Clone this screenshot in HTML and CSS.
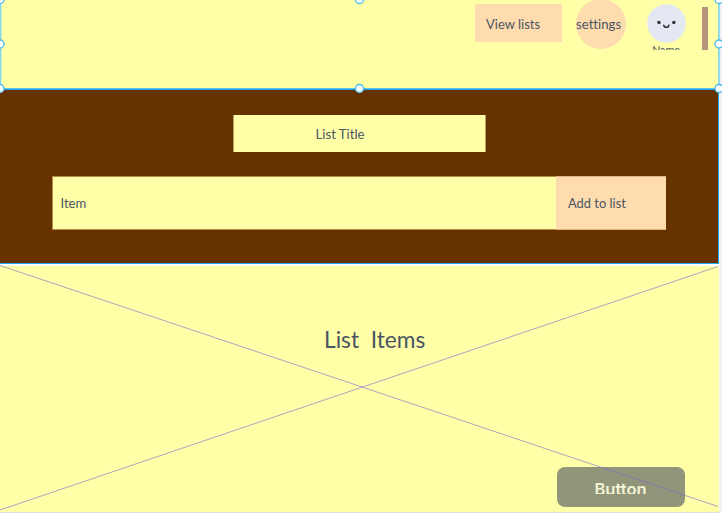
FILE: index.html
```html
<!DOCTYPE html>
<html lang="en">
<head>
<meta charset="utf-8">
<title>List maker</title>
<link rel="stylesheet" href="styles.css">
</head>
<body>
<main class="page">
  <header class="header">
    <button class="view-lists">View lists</button>
    <button class="settings">settings</button>
    <div class="profile">
      <svg class="avatar" viewBox="0 0 39 39"><circle cx="19.5" cy="19.5" r="19.3" fill="#e4e8f2"/><circle cx="12" cy="18.5" r="1.7" fill="#333"/><circle cx="26.8" cy="18.5" r="1.7" fill="#333"/><path d="M10 17.5l2 1M28.5 17.5l-1.5 1" stroke="#444" stroke-width=".8"/><path d="M16.6 20.6c.2 3.6 5.200 3.600 5.400 0" fill="none" stroke="#333" stroke-width="1.400"/></svg>
      <span class="name">Name</span>
    </div>
    <div class="scrollbar"></div>
  </header>
  <section class="editor">
    <div class="title-field">List Title</div>
    <div class="item-row">
      <div class="item-field">Item</div>
      <button class="add">Add to list</button>
    </div>
  </section>
  <section class="items">
    <h1 class="items-title">List&nbsp; Items</h1>
    <button class="action"><span class="action-label">Button</span></button>
    <svg class="cross" viewBox="0 0 719 248"><path d="M0 .5L718 241.500M0 245L718 1.500" fill="none" stroke="#8260d0" stroke-opacity=".6"/></svg>
  </section>
  <svg class="selection" viewBox="0 0 722 100">
    <path d="M.5 0V88M718.900 0V88" stroke="#80d8ef" stroke-width="1.700"/>
    <path d="M0 88.500H719" stroke="#55c4ee"/>
    <path d="M0 89.500H719" stroke="#289fe5"/>
    <g fill="#fff" stroke="#45b8ed" stroke-width="1.300">
      <circle cx="0" cy="-.5" r="4"/><circle cx="359.500" cy="-.5" r="4"/><circle cx="719" cy="-.5" r="4"/>
      <circle cx="0" cy="44" r="4"/><circle cx="719" cy="44" r="4"/>
      <circle cx="0" cy="88.500" r="4"/><circle cx="359.500" cy="88.500" r="4"/><circle cx="719" cy="88.500" r="4"/>
    </g>
  </svg>
</main>
</body>
</html>
```
FILE: styles.css
```css
* { box-sizing: border-box; }
body {
  margin: 0;
  background: #f0f0f6;
  color: #4b5563;
  font: 13px/18px Lato, sans-serif;
  font-variant-ligatures: none;
  overflow: hidden;
}
button {
  border: 0;
  padding: 0;
  color: inherit;
  font: inherit;
  font-variant-ligatures: none;
}
.page { position: relative; width: 719px; height: 513px; }
.header {
  display: flex;
  align-items: flex-start;
  height: 89px;
  padding-left: 474.5px;
  background: #ffffa8;
}
.view-lists {
  width: 87.5px;
  height: 38px;
  margin-top: 4px;
  padding: 2px 0 0 11.5px;
  background: #ffdcae;
  text-align: left;
}
.settings {
  display: flex;
  align-items: center;
  width: 50px;
  height: 50px;
  margin: -1px 0 0 14px;
  border-radius: 50%;
  background: #ffdcae;
  font-size: 13.2px;
}
.profile {
  width: 40px;
  height: 46px;
  margin: 4px 0 0 20px;
  overflow: hidden;
  text-align: center;
}
.avatar { display: block; width: 39px; height: 39px; margin-left: 1px; }
.name { display: block; font-size: 10.7px; line-height: 13px; }
.scrollbar { width: 6px; height: 43px; margin: 7px 0 0 16px; background: #ba957d; }
.editor {
  height: 175px;
  padding: 26px 0 0 52px;
  border-right: 1px solid #22aaf0;
  border-bottom: 1px solid #22aaf0;
  background: #663300;
}
.title-field {
  width: 253px;
  height: 37px;
  margin-left: 181px;
  padding: 10px 0 0 81.5px;
  border: solid #b5a35e;
  border-width: 0 1px;
  background: #ffffa8;
  font-size: 13.2px;
}
.item-row { display: flex; width: 614px; height: 54px; margin-top: 24px; }
.item-field {
  width: 504px;
  padding: 17px 0 0 7.5px;
  border: 1px solid #b38b47;
  border-right: 0;
  background: #ffffa8;
}
.add {
  width: 110px;
  padding-left: 12px;
  border: solid #e0b67f;
  border-width: 1px 0;
  background: #ffdcae;
  font-size: 12.9px;
  text-align: left;
}
.items {
  position: relative;
  height: 249px;
  padding-top: 59px;
  border-top: 2px solid #fff;
  border-bottom: 1px solid #deddea;
  background: #ffffa8;
}
.items-title {
  margin: 0 0 0 324px;
  font-size: 22.7px;
  font-weight: 400;
  line-height: 30px;
}
.action {
  display: block;
  width: 128px;
  height: 40px;
  margin: 111.5px 0 0 556.5px;
  border-radius: 8px;
  background: #91967b;
  color: #f5f5d5;
  font: 600 16.5px/20px Inter, sans-serif;
}
.action-label { display: block; height: 14px; overflow: hidden; line-height: 18px; }
.cross { position: absolute; top: -1px; left: 0; width: 719px; height: 248px; }
.selection { position: absolute; top: 0; left: 0; width: 722px; height: 100px; }
```
